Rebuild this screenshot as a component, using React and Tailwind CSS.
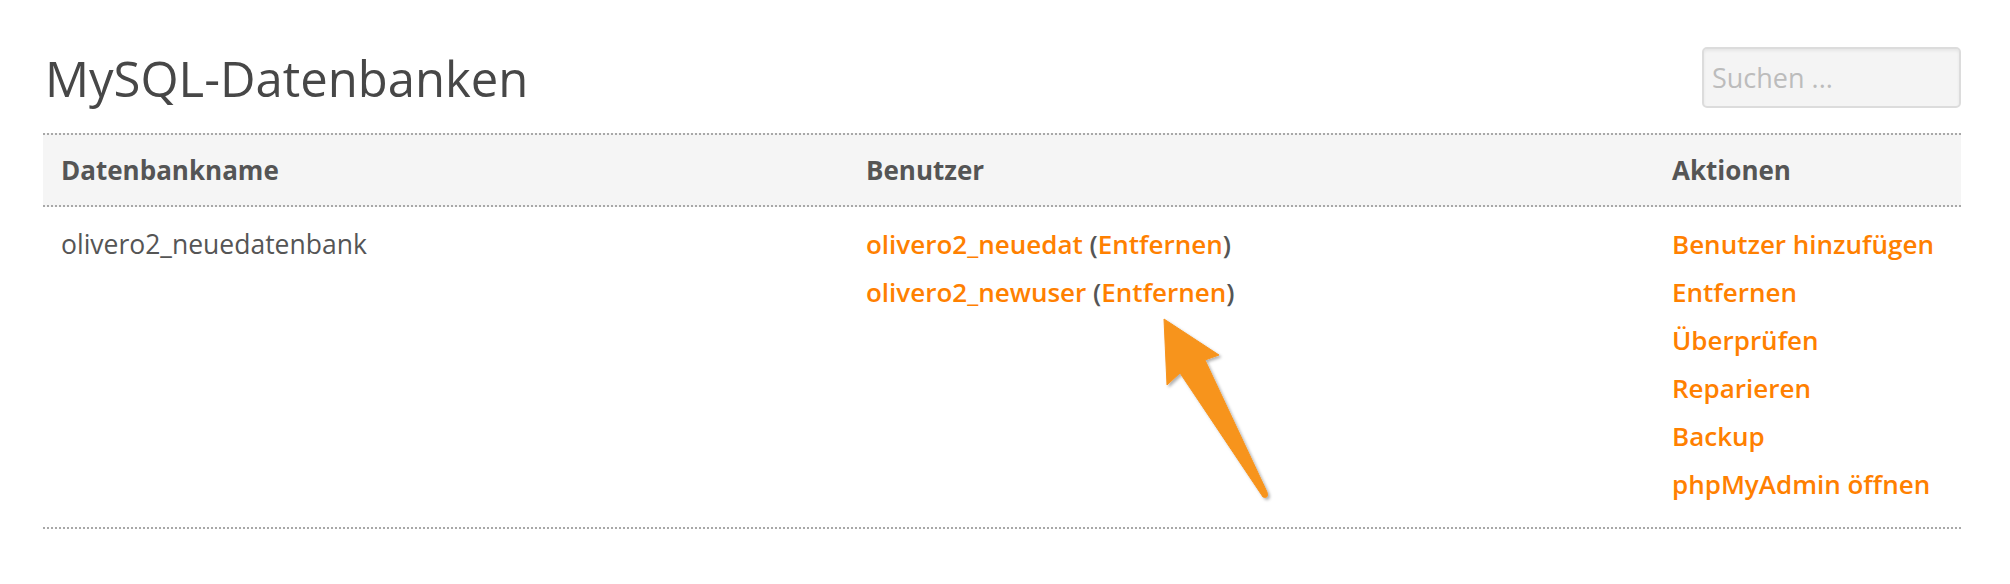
const ACTIONS = ['Benutzer hinzufügen', 'Entfernen', 'Überprüfen', 'Reparieren', 'Backup', 'phpMyAdmin öffnen']
const USERS = ['olivero2_neuedat', 'olivero2_newuser']

function Arrow() {
  return (
    <svg className="absolute left-0 top-0 pointer-events-none" width="2010" height="584" viewBox="0 0 2010 584">
      <defs>
        <filter id="sh" x="-20%" y="-20%" width="140%" height="140%">
          <feDropShadow dx="2" dy="2" stdDeviation="1.5" floodColor="#000" floodOpacity="0.3" />
        </filter>
      </defs>
      <path
        d="M1164 319 L1219 355 L1205 360 L1267 492 Q1269 499 1263 497 L1180 373 L1167 385 Z"
        fill="#f7941e"
        stroke="#f7941e"
        strokeWidth="1"
        strokeLinejoin="round"
        filter="url(#sh)"
      />
    </svg>
  )
}

export default function App() {
  return (
    <div className="relative w-[2010px] h-[584px] bg-white text-[#555] font-['Open_Sans',sans-serif]">
      <div className="pl-[43px] pr-[49px] pt-[46px]">
        <div className="flex items-start justify-between mb-[25px]">
          <h1 className="text-[49px] leading-[60px] text-[#474747] ml-[2px] mt-[2px]">MySQL-Datenbanken</h1>
          <input
            placeholder="Suchen ..."
            className="mt-[1px] w-[259px] h-[61px] rounded-[5px] border-2 border-[#dcdcdc] bg-[#f4f4f4] px-[8px] text-[27px] shadow-[inset_0_2px_3px_rgba(0,0,0,0.06)] placeholder:text-[#bcbcbc] outline-none"
          />
        </div>

        <div className="grid grid-cols-[805px_806px_1fr] bg-[#f5f5f5] border-y-2 border-dotted border-[#a8a8a8] text-[26px] leading-[48px] font-bold py-[11px]">
          <div className="px-[18px]">Datenbankname</div>
          <div className="px-[18px]">Benutzer</div>
          <div className="px-[18px]">Aktionen</div>
        </div>

        <div className="grid grid-cols-[805px_806px_1fr] border-b-2 border-dotted border-[#a8a8a8] text-[26px] leading-[48px] pt-[13px] pb-[19px]">
          <div className="px-[18px] text-[26.5px]">olivero2_neuedatenbank</div>
          <div className="px-[18px] font-semibold">
            {USERS.map(u => (
              <div key={u}>
                <a className="text-[#ff8000]">{u}</a> (<a className="text-[#ff8000]">Entfernen</a>)
              </div>
            ))}
          </div>
          <div className="px-[18px] font-semibold text-[#ff8000]">
            {ACTIONS.map(a => (
              <div key={a}>{a}</div>
            ))}
          </div>
        </div>
      </div>
      <Arrow />
    </div>
  )
}
